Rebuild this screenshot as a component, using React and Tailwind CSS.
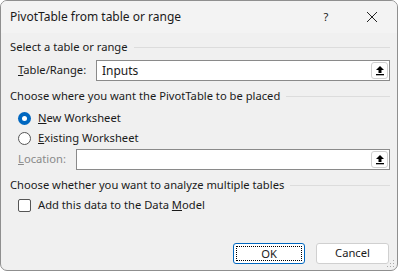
import { useState } from "react";

function UploadBtn() {
  return (
    <div className="absolute right-[1px] top-[1px] bottom-[1px] w-[17px] flex items-center justify-center bg-white border border-[#d0d0d0] rounded-[3px]">
      <svg width="10" height="11" viewBox="0 0 10 11">
        <path d="M5 1 L9 5 L6.5 5 L6.5 8 L3.5 8 L3.5 5 L1 5 Z" fill="#000" />
        <rect x="1" y="9" width="8" height="1.3" fill="#000" />
      </svg>
    </div>
  );
}

function Field({ value, width }) {
  return (
    <div className={`relative h-[21px] bg-white border border-[#8a8a8a] ${width}`}>
      <span className="absolute left-[5px] top-[1px] leading-[17px] text-[12px]">{value}</span>
      <UploadBtn />
    </div>
  );
}

function Legend({ children }) {
  return (
    <div className="flex items-center h-[20px] pl-[9px] pr-[7px]">
      <span className="whitespace-nowrap">{children}</span>
      <div className="flex-1 ml-[6px] h-px bg-[#dcdcdc]" />
    </div>
  );
}

export default function App() {
  const [where, setWhere] = useState("new");
  const [dataModel, setDataModel] = useState(false);

  return (
    <div
      className="w-[398px] h-[271px] bg-[#f0f0f0] border border-[#8f8f8f] rounded-[7px] overflow-hidden text-[11.2px] text-[#1a1a1a] flex flex-col relative"
      style={{ fontFamily: '"Segoe UI", "Noto Sans", "Open Sans", sans-serif' }}
    >
      <div className="h-[32px] flex items-center bg-[#f3f3f3] shrink-0">
        <span className="pl-[9px] text-[12px] flex-1">PivotTable from table or range</span>
        <span className="w-[20px] text-center mr-[30px]">?</span>
        <svg width="12" height="12" viewBox="0 0 12 12" className="mr-[19px]">
          <path d="M1 1 L11 11 M11 1 L1 11" stroke="#222" strokeWidth="1" />
        </svg>
      </div>

      <div className="mt-[4px]">
        <Legend>Select a table or range</Legend>
      </div>
      <div className="flex items-center h-[21px] mt-[3px]">
        <span className="pl-[17px] w-[95px]"><u>T</u>able/Range:</span>
        <Field value="Inputs" width="w-[294px]" />
      </div>

      <div className="mt-[5px]">
        <Legend>Choose where you want the PivotTable to be placed</Legend>
      </div>
      <label className="flex items-center h-[20px] pl-[17px] mt-[2px]" onClick={() => setWhere("new")}>
        <span className={`w-[13px] h-[13px] rounded-full flex items-center justify-center ${where === "new" ? "bg-[#0067c0]" : "border border-[#555] bg-white"}`}>
          {where === "new" && <span className="w-[5px] h-[5px] rounded-full bg-white" />}
        </span>
        <span className="ml-[7px]"><u>N</u>ew Worksheet</span>
      </label>
      <label className="flex items-center h-[20px] pl-[17px]" onClick={() => setWhere("existing")}>
        <span className={`w-[13px] h-[13px] rounded-full flex items-center justify-center ${where === "existing" ? "bg-[#0067c0]" : "border border-[#555] bg-white"}`}>
          {where === "existing" && <span className="w-[5px] h-[5px] rounded-full bg-white" />}
        </span>
        <span className="ml-[7px]"><u>E</u>xisting Worksheet</span>
      </label>
      <div className="flex items-center h-[21px] mt-[1px]">
        <span className="pl-[17px] w-[75px] text-[#8a8a8a]"><u>L</u>ocation:</span>
        <Field value="" width="w-[314px]" />
      </div>

      <div className="mt-[5px]">
        <Legend>Choose whether you want to analyze multiple tables</Legend>
      </div>
      <label className="flex items-center h-[21px] pl-[17px]" onClick={() => setDataModel(!dataModel)}>
        <span className="w-[13px] h-[13px] border border-[#555] rounded-[2px] bg-white" />
        <span className="ml-[7px]">Add this data to the Data <u>M</u>odel</span>
      </label>

      <div className="flex justify-end gap-[11px] pr-[8px] mt-[27px]">
        <button className="w-[72px] h-[21px] bg-white border border-[#0067c0] rounded-[3px] p-[2px]">
          <span className="block h-full border border-dotted border-black leading-[13px]">OK</span>
        </button>
        <button className="w-[73px] h-[21px] bg-white border border-[#d0d0d0] rounded-[3px]">Cancel</button>
      </div>

      <svg width="8" height="8" viewBox="0 0 8 8" className="absolute right-[2px] bottom-[2px]">
        <rect x="6" y="0" width="1" height="1" fill="#aaa" />
        <rect x="3" y="3" width="1" height="1" fill="#aaa" />
        <rect x="6" y="3" width="1" height="1" fill="#aaa" />
        <rect x="0" y="6" width="1" height="1" fill="#aaa" />
        <rect x="3" y="6" width="1" height="1" fill="#aaa" />
        <rect x="6" y="6" width="1" height="1" fill="#aaa" />
      </svg>
    </div>
  );
}
